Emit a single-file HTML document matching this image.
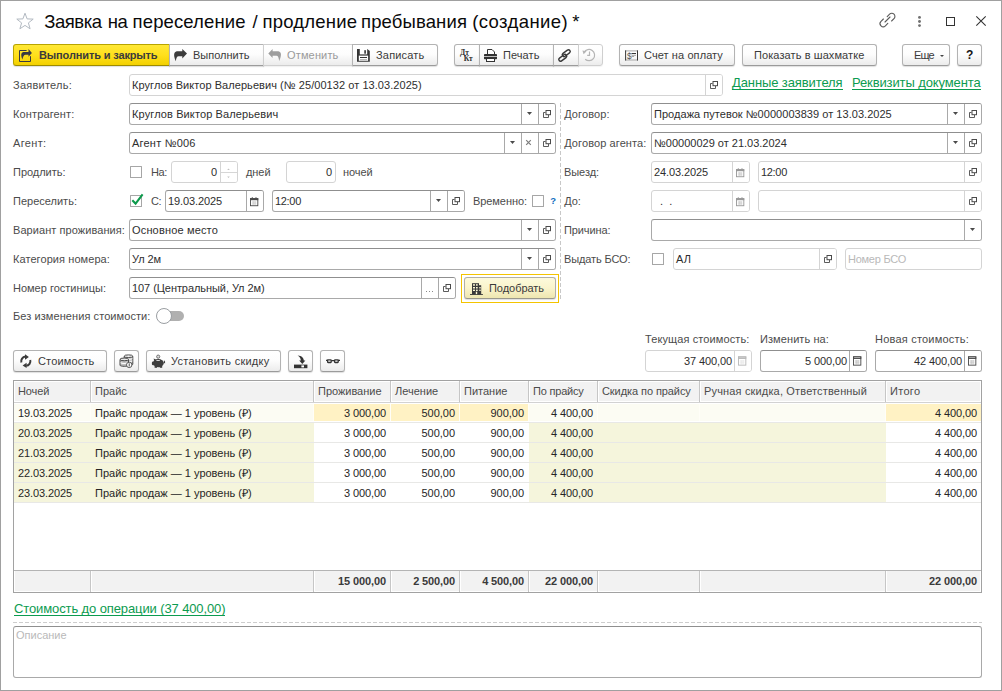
<!DOCTYPE html>
<html lang="ru">
<head>
<meta charset="utf-8">
<title>Заявка на переселение / продление пребывания (создание) *</title>
<style>
*{box-sizing:border-box;margin:0;padding:0}
html,body{width:1002px;height:691px;overflow:hidden;background:#fff}
body{font-family:"Liberation Sans",sans-serif;font-size:11px;color:#333;position:relative}
#win{position:absolute;left:0;top:0;width:1002px;height:691px;background:#fff;box-shadow:inset 0 0 0 1px #a0a0a0}
.a{position:absolute;white-space:nowrap}
svg{display:block;overflow:visible}
.l{position:absolute;white-space:nowrap;height:22px;line-height:22px;color:#4b4b4b}
.f{position:absolute;height:22px;border:1px solid #a9a9a9;border-top-color:#8f8f8f;border-radius:3px;background:#fff;line-height:20px;white-space:nowrap;overflow:hidden;color:#2e2e2e}
.f.ro{border-color:#d4d4d4}
.f .t{position:absolute;top:0;height:20px;line-height:20px}
.f .b{position:absolute;top:0;bottom:0;width:17px;border-left:1px solid #a9a9a9;background:#fff}
.f.ro .b{border-left-color:#d4d4d4}
.f .b .i{position:absolute}
.ph{color:#b9b9b9}
.btn{position:absolute;height:22px;border:1px solid #b3b3b3;border-bottom-color:#9b9b9b;border-radius:3px;background:linear-gradient(#ffffff 0%,#fdfdfd 45%,#ececec 100%);line-height:20px;white-space:nowrap;color:#3a3a3a;box-shadow:0 1px 1px rgba(0,0,0,.13)}
.btn .t{position:absolute;top:0;height:20px;line-height:20px}
.btn svg{position:absolute}
.btn.dis{color:#9a9a9a;border-color:#cfcfcf;box-shadow:0 1px 1px rgba(0,0,0,.05)}
.btn.y{background:linear-gradient(#ffe836 0%,#ffe01c 50%,#f3d100 100%);border-color:#b8a400;border-bottom-color:#9e8c00;color:#3b3b3b}
.btn.gl{border-radius:3px 0 0 3px}
.btn.gm{border-radius:0}
.btn.gr{border-radius:0 3px 3px 0}
.cb{position:absolute;width:12px;height:12px;border:1px solid #a6a6a6;border-radius:0.5px;background:#fff}
.lnk{position:absolute;white-space:nowrap;font-size:13px;color:#0c9b50;height:16px;line-height:16px}
.lnk i{position:absolute;left:0;right:0;height:1px;background:#0c9b50;top:14px}
.btn.def{background:linear-gradient(#fdfadc 0%,#faf4cc 50%,#eee6b0 100%);border-color:#b2b0a6;border-bottom-color:#9a988c}
.th{height:22px;line-height:22px;color:#4b4b4b}
.td{height:20px;line-height:20px;color:#262626}
.title{position:absolute;left:0;top:9.6px;height:24px;width:700px;font-size:18.5px;color:#0a0a0a;white-space:nowrap}
.title span{position:absolute;top:0;height:24px;line-height:24px}

</style>
</head>
<body>
<div id="win">
<svg class="a" style="left:16px;top:12px;" width="18" height="18" viewBox="0 0 18 18"><path d="M9 1.2L11.1 6.9L17.2 7.1L12.4 10.9L14.1 16.8L9 13.4L3.9 16.8L5.6 10.9L0.8 7.1L6.9 6.9Z" fill="none" stroke="#b3bac2" stroke-width="1"/></svg>
<div class="title"><span style="left:44.24px;letter-spacing:-0.45px">Заявка</span> <span style="left:107.8px;letter-spacing:-0.6px">на</span> <span style="left:132.62px;letter-spacing:0.112px">переселение</span> <span style="left:252.6px;letter-spacing:0px">/</span> <span style="left:262.5px;letter-spacing:0.2px">продление</span> <span style="left:361.06px;letter-spacing:0.124px">пребывания</span> <span style="left:472.18px;letter-spacing:0.391px">(создание)</span> <span style="left:572.36px;letter-spacing:0px">*</span></div>
<svg class="a" style="left:879px;top:12px;" width="18" height="17" viewBox="0 0 18 17"><g fill="none" stroke="#5a5a5a" stroke-width="1.1" stroke-linecap="round"><path d="M8.2 4.6L10.6 2.2a3.1 3.1 0 0 1 4.4 4.4L12.6 9"/><path d="M8.8 11.4L6.4 13.8a3.1 3.1 0 0 1 -4.4 -4.4L4.4 7"/><path d="M6 10L11 5"/></g></svg>
<svg class="a" style="left:918px;top:16px;" width="3" height="11" viewBox="0 0 3 11"><circle cx="1.5" cy="1.4" r="1.45" fill="#707070"/><circle cx="1.5" cy="5.5" r="1.45" fill="#707070"/><circle cx="1.5" cy="9.6" r="1.45" fill="#707070"/></svg>
<div class="a" style="left:946px;top:17px;width:9px;height:9px;border:1px solid #333"></div>
<svg class="a" style="left:976px;top:16px;" width="10" height="10" viewBox="0 0 10 10"><path d="M0.3 0.3L9.7 9.7M9.7 0.3L0.3 9.7" stroke="#333" stroke-width="1.1" fill="none"/></svg>
<div class="btn y gl" style="left:13px;top:44px;width:157px;height:22px"><svg style="left:4px;top:3px" width="15" height="15" viewBox="0 0 15 15"><path d="M8.6 2.5H1.5V13.5H12.5V8.2" fill="none" stroke="#3a3a42"/><path d="M10.5 1L13.9 5.1L10.5 8.7V6.7H7.5C6 6.7 5 8.5 4.4 11.6C3.4 9 2.8 6.4 3.6 5.2C4.2 4.3 5 4 6.5 4H10.5Z" fill="#3a3a42"/></svg><span class="t" style="left:25px;letter-spacing:-0.135px;font-weight:bold;">Выполнить и закрыть</span></div>
<div class="btn gm" style="left:169px;top:44px;width:95px;height:22px"><svg style="left:3px;top:3px" width="15" height="14" viewBox="0 0 15 14"><path d="M9.3 0.9L14 5.6L9.3 10.6V8.2H5.5C4 8.2 3.3 10 2.8 13.2C1.2 10 0.6 6 1.8 4.6C2.5 3.6 3.5 3.2 5 3.2H9.3Z" fill="#3c3c3c"/></svg><span class="t" style="left:23px;letter-spacing:0.0px;">Выполнить</span></div>
<div class="btn gm dis" style="left:263px;top:44px;width:90px;height:22px"><svg style="left:3px;top:3px" width="15" height="14" viewBox="0 0 15 14"><path d="M5.6 1L1.3 5.6L5.6 10.1V7.8H9.5C11 7.8 11.7 9.6 12.2 13C13.8 10 14.6 6 13.4 4.6C12.7 3.6 11.7 3.2 10.2 3.2H5.6Z" fill="#9e9e9e"/></svg><span class="t" style="left:23px;letter-spacing:0.154px;">Отменить</span></div>
<div class="btn gr" style="left:352px;top:44px;width:86px;height:22px"><svg style="left:4px;top:4px" width="13" height="13" viewBox="0 0 13 13"><path d="M0 0H10.2L12.8 2V12.8H0Z" fill="#353535"/><rect x="2.8" y="0" width="7.4" height="5.4" fill="#fff"/><rect x="7.3" y="1.2" width="1.6" height="3.5" fill="#353535"/><rect x="1.8" y="6.6" width="9.3" height="5.2" fill="#fff"/><rect x="3" y="8" width="7" height="1" fill="#353535"/><rect x="3" y="10.2" width="7" height="1" fill="#aaa"/></svg><span class="t" style="left:23px;letter-spacing:0.186px;">Записать</span></div>
<div class="btn gl" style="left:454px;top:44px;width:26px;height:22px"><svg style="left:5px;top:4px" width="14" height="13" viewBox="0 0 14 13"><g font-family="Liberation Serif,serif" font-weight="bold" fill="#2e2e2e"><text x="0" y="5.8" font-size="7.6">Д</text><text x="5.2" y="5.8" font-size="7.4">т</text><text x="3.8" y="11.8" font-size="7.6">К</text><text x="8.9" y="11.8" font-size="7.4">т</text></g></svg></div>
<div class="btn gm" style="left:479px;top:44px;width:75px;height:22px"><svg style="left:4px;top:4px" width="14" height="13" viewBox="0 0 14 13"><path d="M3.5 5V0.5H8L10.5 3V5" fill="#fff" stroke="#333"/><rect x="0" y="5" width="13" height="5.2" rx="0.8" fill="#333"/><rect x="0" y="7.1" width="13" height="0.9" fill="#cfcfcf"/><rect x="2.5" y="9.5" width="8" height="3" fill="#fff" stroke="#333"/></svg><span class="t" style="left:23px;letter-spacing:0.073px;">Печать</span></div>
<div class="btn gm" style="left:553px;top:44px;width:26px;height:22px"><svg style="left:4px;top:4px" width="14" height="14" viewBox="0 0 14 14"><g fill="none" stroke="#383838" stroke-width="1.4" transform="rotate(-37 6.5 6.5)"><rect x="4.8" y="3.95" width="9" height="3.5" rx="1.75"/><rect x="-0.8" y="5.55" width="9" height="3.5" rx="1.75"/></g></svg></div>
<div class="btn gr dis" style="left:578px;top:44px;width:25px;height:22px"><svg style="left:3.2px;top:3.4px" width="14" height="14" viewBox="0 0 14 14"><g fill="none" stroke="#b5b5b5" stroke-width="1.2"><path d="M2.2 4.2A5.6 5.6 0 1 1 3.2 11.2"/><path d="M7.5 3.6V7.3H5.2"/></g><path d="M0.4 2.6L4.6 3.2L1.6 6.2Z" fill="#b5b5b5"/></svg></div>
<div class="btn " style="left:619px;top:44px;width:116px;height:22px"><svg style="left:5px;top:5px" width="13" height="11" viewBox="0 0 13 11"><rect x="0.1" y="0.4" width="12.9" height="1" fill="#a8a8a8"/><rect x="0.1" y="9.5" width="12.9" height="1" fill="#a8a8a8"/><rect x="0.1" y="0.4" width="1" height="10.1" fill="#383838"/><rect x="12" y="0.4" width="1" height="10.1" fill="#383838"/><text x="1.9" y="8.7" font-size="8.2" font-family="Liberation Sans,sans-serif" fill="#505050">$</text><rect x="6.5" y="3" width="4.5" height="1" fill="#383838"/><rect x="6.5" y="4.8" width="4.5" height="0.9" fill="#9a9a9a"/><rect x="6.5" y="6.1" width="2.6" height="0.9" fill="#9a9a9a"/></svg><span class="t" style="left:24px;letter-spacing:0.092px;">Счет на оплату</span></div>
<div class="btn " style="left:742px;top:44px;width:135px;height:22px"><span class="t" style="left:11px;letter-spacing:0.092px;">Показать в шахматке</span></div>
<div class="btn " style="left:902px;top:44px;width:48px;height:22px"><svg style="left:37px;top:10px" width="4" height="2" viewBox="0 0 4 2"><path d="M0 0H4L2 2Z" fill="#444"/></svg><span class="t" style="left:11px;letter-spacing:-0.864px;">Еще</span></div>
<div class="btn " style="left:957px;top:44px;width:25px;height:22px"><span class="t" style="left:8px;letter-spacing:0px;font-weight:bold;font-size:12px;color:#151515;">?</span></div>
<div class="l" style="left:13px;top:74px;letter-spacing:0.241px;">Заявитель:</div>
<div class="f ro" style="left:129px;top:74px;width:594px;height:22px"><span class="t" style="left:2px;letter-spacing:0.058px">Круглов Виктор Валерьевич (№ 25/00132 от 13.03.2025)</span><span class="b" style="right:0px"><svg class="i" style="left:4px;top:6px" width="8" height="8" viewBox="0 0 8 8"><path d="M2.5 2.5H0.5V7.5H5.5V5" fill="none" stroke="#4a4a4a" stroke-width="1" opacity="0.9"/><rect x="3" y="0.5" width="4.5" height="4.2" fill="#fff" stroke="#4a4a4a" stroke-width="1"/></svg></span></div>
<div class="lnk" style="left:732px;top:75px;letter-spacing:-0.106px">Данные заявителя<i></i></div>
<div class="lnk" style="left:852px;top:75px;letter-spacing:-0.116px">Реквизиты документа<i></i></div>
<div class="l" style="left:13px;top:103px;letter-spacing:0.139px;">Контрагент:</div>
<div class="f" style="left:129px;top:103px;width:427px;height:22px"><span class="t" style="left:2px;letter-spacing:0.115px">Круглов Виктор Валерьевич</span><span class="b" style="right:17px"><svg class="i" style="left:4.6px;top:8.3px" width="5" height="3" viewBox="0 0 5 3"><path d="M0 0H5L2.5 2.9Z" fill="#4a4a4a"/></svg></span><span class="b" style="right:0px"><svg class="i" style="left:4px;top:6px" width="8" height="8" viewBox="0 0 8 8"><path d="M2.5 2.5H0.5V7.5H5.5V5" fill="none" stroke="#4a4a4a" stroke-width="1" opacity="0.9"/><rect x="3" y="0.5" width="4.5" height="4.2" fill="#fff" stroke="#4a4a4a" stroke-width="1"/></svg></span></div>
<div class="l" style="left:13px;top:132px;letter-spacing:0.346px;">Агент:</div>
<div class="f" style="left:129px;top:132px;width:427px;height:22px"><span class="t" style="left:2px;letter-spacing:0.211px">Агент №006</span><span class="b" style="right:34px"><svg class="i" style="left:4.6px;top:8.3px" width="5" height="3" viewBox="0 0 5 3"><path d="M0 0H5L2.5 2.9Z" fill="#4a4a4a"/></svg></span><span class="b" style="right:17px"><svg class="i" style="left:4.4px;top:7.4px" width="5" height="5" viewBox="0 0 5 5"><path d="M0.2 0.2L4.8 4.8M4.8 0.2L0.2 4.8" stroke="#7c7c7c" stroke-width="1.2" fill="none"/></svg></span><span class="b" style="right:0px"><svg class="i" style="left:4px;top:6px" width="8" height="8" viewBox="0 0 8 8"><path d="M2.5 2.5H0.5V7.5H5.5V5" fill="none" stroke="#4a4a4a" stroke-width="1" opacity="0.9"/><rect x="3" y="0.5" width="4.5" height="4.2" fill="#fff" stroke="#4a4a4a" stroke-width="1"/></svg></span></div>
<div class="l" style="left:13px;top:161px;letter-spacing:-0.026px;">Продлить:</div>
<div class="cb" style="left:130px;top:166px"></div>
<div class="l" style="left:151px;top:161px;letter-spacing:-0.375px;">На:</div>
<div class="f ro" style="left:171px;top:161px;width:67px;height:22px"><span class="t" style="right:20px;letter-spacing:0px;margin-right:0px">0</span><span class="b" style="right:0px"><svg class="i" style="left:0;top:0" width="16" height="20" viewBox="0 0 16 20"><rect x="0" y="10" width="16" height="1" fill="#d6d6d6"/><path d="M6.2 7.9L7.5 6.6L8.8 7.9Z M6.2 14.6L7.5 15.9L8.8 14.6Z" fill="#c0c0c0"/></svg></span></div>
<div class="l" style="left:246px;top:161px;letter-spacing:-0.066px;">дней</div>
<div class="f ro" style="left:286px;top:161px;width:50px;height:22px"><span class="t" style="right:3px;letter-spacing:0px;margin-right:0px">0</span></div>
<div class="l" style="left:343px;top:161px;letter-spacing:-0.094px;">ночей</div>
<div class="l" style="left:13px;top:190px;letter-spacing:0.006px;">Переселить:</div>
<div class="cb" style="left:130px;top:195px"></div>
<svg class="a" style="left:130px;top:192px;" width="15" height="15" viewBox="0 0 15 15"><path d="M2.3 8.2L5.6 11.6L12.6 2.4" fill="none" stroke="#0d9a4c" stroke-width="2.1" stroke-linejoin="miter"/></svg>
<div class="l" style="left:151px;top:190px;letter-spacing:-0.5px;">С:</div>
<div class="f" style="left:165px;top:190px;width:99px;height:22px"><span class="t" style="left:2px;letter-spacing:-0.113px">19.03.2025</span><span class="b" style="right:0px"><svg class="i" style="left:3px;top:5.8px" width="8.3" height="9.2" viewBox="0 0 9 10"><rect x="0.5" y="1.8" width="8" height="7.7" fill="#fff" stroke="#4a4a4a"/><rect x="0" y="1.3" width="9" height="2.2" fill="#4a4a4a"/><path d="M2.5 0V1.5M6.5 0V1.5" stroke="#4a4a4a" stroke-width="1.2" opacity="0.7"/><path d="M2 5.5H7M2 7.5H7M3.5 4.5V8.5M5.5 4.5V8.5" stroke="#bdbdbd" stroke-width="0.7"/></svg></span></div>
<div class="f" style="left:272px;top:190px;width:193px;height:22px"><span class="t" style="left:2px;letter-spacing:-0.312px">12:00</span><span class="b" style="right:17px"><svg class="i" style="left:4.6px;top:8.3px" width="5" height="3" viewBox="0 0 5 3"><path d="M0 0H5L2.5 2.9Z" fill="#4a4a4a"/></svg></span><span class="b" style="right:0px"><svg class="i" style="left:4px;top:6px" width="8" height="8" viewBox="0 0 8 8"><path d="M2.5 2.5H0.5V7.5H5.5V5" fill="none" stroke="#4a4a4a" stroke-width="1" opacity="0.9"/><rect x="3" y="0.5" width="4.5" height="4.2" fill="#fff" stroke="#4a4a4a" stroke-width="1"/></svg></span></div>
<div class="l" style="left:473px;top:190px;letter-spacing:-0.069px;">Временно:</div>
<div class="cb" style="left:532px;top:195px"></div>
<div class="l" style="left:550.2px;top:189.8px;letter-spacing:0px;font-weight:bold;color:#0f6cc0;font-size:9.5px;">?</div>
<div class="l" style="left:13px;top:219px;letter-spacing:0.069px;">Вариант проживания:</div>
<div class="f" style="left:129px;top:219px;width:427px;height:22px"><span class="t" style="left:2px;letter-spacing:0.163px">Основное место</span><span class="b" style="right:17px"><svg class="i" style="left:4.6px;top:8.3px" width="5" height="3" viewBox="0 0 5 3"><path d="M0 0H5L2.5 2.9Z" fill="#4a4a4a"/></svg></span><span class="b" style="right:0px"><svg class="i" style="left:4px;top:6px" width="8" height="8" viewBox="0 0 8 8"><path d="M2.5 2.5H0.5V7.5H5.5V5" fill="none" stroke="#4a4a4a" stroke-width="1" opacity="0.9"/><rect x="3" y="0.5" width="4.5" height="4.2" fill="#fff" stroke="#4a4a4a" stroke-width="1"/></svg></span></div>
<div class="l" style="left:13px;top:248px;letter-spacing:0.075px;">Категория номера:</div>
<div class="f" style="left:129px;top:248px;width:427px;height:22px"><span class="t" style="left:2px;letter-spacing:-0.084px">Ул 2м</span><span class="b" style="right:17px"><svg class="i" style="left:4.6px;top:8.3px" width="5" height="3" viewBox="0 0 5 3"><path d="M0 0H5L2.5 2.9Z" fill="#4a4a4a"/></svg></span><span class="b" style="right:0px"><svg class="i" style="left:4px;top:6px" width="8" height="8" viewBox="0 0 8 8"><path d="M2.5 2.5H0.5V7.5H5.5V5" fill="none" stroke="#4a4a4a" stroke-width="1" opacity="0.9"/><rect x="3" y="0.5" width="4.5" height="4.2" fill="#fff" stroke="#4a4a4a" stroke-width="1"/></svg></span></div>
<div class="l" style="left:13px;top:277px;letter-spacing:0.0px;">Номер гостиницы:</div>
<div class="f" style="left:129px;top:277px;width:327px;height:22px"><span class="t" style="left:2px;letter-spacing:-0.063px">107 (Центральный, Ул 2м)</span><span class="b" style="right:17px"><svg class="i" style="left:4px;top:13px" width="9" height="2" viewBox="0 0 9 2"><rect x="0" y="0" width="1" height="1" fill="#8a8a8a"/><rect x="3" y="0" width="1" height="1" fill="#8a8a8a"/><rect x="6" y="0" width="1" height="1" fill="#8a8a8a"/></svg></span><span class="b" style="right:0px"><svg class="i" style="left:4px;top:6px" width="8" height="8" viewBox="0 0 8 8"><path d="M2.5 2.5H0.5V7.5H5.5V5" fill="none" stroke="#4a4a4a" stroke-width="1" opacity="0.9"/><rect x="3" y="0.5" width="4.5" height="4.2" fill="#fff" stroke="#4a4a4a" stroke-width="1"/></svg></span></div>
<div class="a" style="left:461px;top:274px;width:98px;height:29px;border:1px solid #f4c400"></div>
<div class="btn def" style="left:464px;top:277px;width:92px;height:22px"><svg style="left:5px;top:5px" width="13" height="12" viewBox="0 0 13 12"><g fill="#3a3a3a"><rect x="2" y="0.2" width="7" height="11.2"/><rect x="9" y="2.2" width="2.2" height="9.2"/><rect x="0" y="11.1" width="12.9" height="0.9"/></g><g fill="#fcf7d4"><rect x="3" y="1.2" width="2" height="1.5"/><rect x="6" y="1.2" width="1.7" height="1.5"/><rect x="3" y="4" width="2" height="1.5"/><rect x="6" y="4" width="1.7" height="1.5"/><rect x="3" y="6.6" width="2" height="1.4"/><rect x="6" y="6.6" width="1.7" height="1.4"/><rect x="9.3" y="4" width="1.4" height="1.5"/><rect x="9.3" y="6.6" width="1.4" height="1.4"/><rect x="5.8" y="8.7" width="1.4" height="2.4"/></g></svg><span class="t" style="left:24px;letter-spacing:-0.047px;">Подобрать</span></div>
<div class="l" style="left:13px;top:305px;letter-spacing:0.078px;">Без изменения стоимости:</div>
<div class="a" style="left:164px;top:311px;width:20px;height:10px;border-radius:5px;background:#b0b0b0"></div>
<div class="a" style="left:155.6px;top:307.6px;width:16.6px;height:16.8px;border-radius:8.4px;background:#fff;border:1px solid #9a9ea2"></div>
<div class="a" style="left:560px;top:103px;width:1px;height:197px;background:repeating-linear-gradient(to bottom,#c8c8c8 0,#c8c8c8 3.6px,transparent 3.6px,transparent 6px)"></div>
<div class="l" style="left:564.2px;top:103px;letter-spacing:0.095px;">Договор:</div>
<div class="f" style="left:651px;top:103px;width:331px;height:22px"><span class="t" style="left:2px;letter-spacing:0.038px">Продажа путевок №0000003839 от 13.03.2025</span><span class="b" style="right:17px"><svg class="i" style="left:4.6px;top:8.3px" width="5" height="3" viewBox="0 0 5 3"><path d="M0 0H5L2.5 2.9Z" fill="#4a4a4a"/></svg></span><span class="b" style="right:0px"><svg class="i" style="left:4px;top:6px" width="8" height="8" viewBox="0 0 8 8"><path d="M2.5 2.5H0.5V7.5H5.5V5" fill="none" stroke="#4a4a4a" stroke-width="1" opacity="0.9"/><rect x="3" y="0.5" width="4.5" height="4.2" fill="#fff" stroke="#4a4a4a" stroke-width="1"/></svg></span></div>
<div class="l" style="left:564.2px;top:132px;letter-spacing:0.097px;">Договор агента:</div>
<div class="f" style="left:651px;top:132px;width:331px;height:22px"><span class="t" style="left:2px;letter-spacing:0.001px">№00000029 от 21.03.2024</span><span class="b" style="right:17px"><svg class="i" style="left:4.6px;top:8.3px" width="5" height="3" viewBox="0 0 5 3"><path d="M0 0H5L2.5 2.9Z" fill="#4a4a4a"/></svg></span><span class="b" style="right:0px"><svg class="i" style="left:4px;top:6px" width="8" height="8" viewBox="0 0 8 8"><path d="M2.5 2.5H0.5V7.5H5.5V5" fill="none" stroke="#4a4a4a" stroke-width="1" opacity="0.9"/><rect x="3" y="0.5" width="4.5" height="4.2" fill="#fff" stroke="#4a4a4a" stroke-width="1"/></svg></span></div>
<div class="l" style="left:564px;top:161px;letter-spacing:-0.073px;">Выезд:</div>
<div class="f ro" style="left:651px;top:161px;width:99px;height:22px"><span class="t" style="left:2px;letter-spacing:-0.113px">24.03.2025</span><span class="b" style="right:0px"><svg class="i" style="left:3px;top:5.8px" width="8.3" height="9.2" viewBox="0 0 9 10"><rect x="0.5" y="1.8" width="8" height="7.7" fill="#fff" stroke="#989898"/><rect x="0" y="1.3" width="9" height="2.2" fill="#989898"/><path d="M2.5 0V1.5M6.5 0V1.5" stroke="#989898" stroke-width="1.2" opacity="0.7"/><path d="M2 5.5H7M2 7.5H7M3.5 4.5V8.5M5.5 4.5V8.5" stroke="#bdbdbd" stroke-width="0.7"/></svg></span></div>
<div class="f ro" style="left:758px;top:161px;width:224px;height:22px"><span class="t" style="left:2px;letter-spacing:-0.312px">12:00</span><span class="b" style="right:0px"><svg class="i" style="left:4px;top:6px" width="8" height="8" viewBox="0 0 8 8"><path d="M2.5 2.5H0.5V7.5H5.5V5" fill="none" stroke="#4a4a4a" stroke-width="1" opacity="0.9"/><rect x="3" y="0.5" width="4.5" height="4.2" fill="#fff" stroke="#4a4a4a" stroke-width="1"/></svg></span></div>
<div class="l" style="left:564.2px;top:190px;letter-spacing:-0.089px;">До:</div>
<div class="f ro" style="left:651px;top:190px;width:99px;height:22px"><span class="t" style="left:2px;letter-spacing:0px">&nbsp; .&nbsp; .</span><span class="b" style="right:0px"><svg class="i" style="left:3px;top:5.8px" width="8.3" height="9.2" viewBox="0 0 9 10"><rect x="0.5" y="1.8" width="8" height="7.7" fill="#fff" stroke="#989898"/><rect x="0" y="1.3" width="9" height="2.2" fill="#989898"/><path d="M2.5 0V1.5M6.5 0V1.5" stroke="#989898" stroke-width="1.2" opacity="0.7"/><path d="M2 5.5H7M2 7.5H7M3.5 4.5V8.5M5.5 4.5V8.5" stroke="#bdbdbd" stroke-width="0.7"/></svg></span></div>
<div class="f ro" style="left:758px;top:190px;width:224px;height:22px"><span class="b" style="right:0px"><svg class="i" style="left:4px;top:6px" width="8" height="8" viewBox="0 0 8 8"><path d="M2.5 2.5H0.5V7.5H5.5V5" fill="none" stroke="#4a4a4a" stroke-width="1" opacity="0.9"/><rect x="3" y="0.5" width="4.5" height="4.2" fill="#fff" stroke="#4a4a4a" stroke-width="1"/></svg></span></div>
<div class="l" style="left:564px;top:219px;letter-spacing:-0.102px;">Причина:</div>
<div class="f" style="left:651px;top:219px;width:331px;height:22px"><span class="b" style="right:0px"><svg class="i" style="left:4.6px;top:8.3px" width="5" height="3" viewBox="0 0 5 3"><path d="M0 0H5L2.5 2.9Z" fill="#4a4a4a"/></svg></span></div>
<div class="l" style="left:564px;top:248px;letter-spacing:-0.119px;">Выдать БСО:</div>
<div class="cb" style="left:652px;top:253px"></div>
<div class="f ro" style="left:673px;top:248px;width:164px;height:22px"><span class="t" style="left:2px;letter-spacing:0.102px">АЛ</span><span class="b" style="right:0px"><svg class="i" style="left:4px;top:6px" width="8" height="8" viewBox="0 0 8 8"><path d="M2.5 2.5H0.5V7.5H5.5V5" fill="none" stroke="#4a4a4a" stroke-width="1" opacity="0.9"/><rect x="3" y="0.5" width="4.5" height="4.2" fill="#fff" stroke="#4a4a4a" stroke-width="1"/></svg></span></div>
<div class="f ro" style="left:845px;top:248px;width:137px;height:22px"><span class="t ph" style="left:2px;letter-spacing:-0.255px">Номер БСО</span></div>
<div class="l" style="left:645px;top:328px;letter-spacing:0.109px;">Текущая стоимость:</div>
<div class="f ro" style="left:645px;top:350px;width:107px;height:22px"><span class="t" style="right:19px;letter-spacing:-0.111px;margin-right:0.111px">37 400,00</span><span class="b" style="right:0px"><svg class="i" style="left:3px;top:5px" width="8.3" height="10" viewBox="0 0 9 10"><rect x="0.5" y="0.5" width="8" height="9" fill="#fff" stroke="#b9b9b9"/><rect x="0" y="0" width="9" height="2.8" fill="#b9b9b9"/><rect x="1.2" y="1" width="6.6" height="0.8" fill="#cfcfcf"/><path d="M2 5H7M2 7H7M3.5 4V8.6M5.5 4V8.6" stroke="#b9b9b9" stroke-width="0.7" opacity="0.4"/></svg></span></div>
<div class="l" style="left:760px;top:328px;letter-spacing:0.087px;">Изменить на:</div>
<div class="f" style="left:760px;top:350px;width:107px;height:22px"><span class="t" style="right:19px;letter-spacing:-0.109px;margin-right:0.109px">5 000,00</span><span class="b" style="right:0px"><svg class="i" style="left:3px;top:5px" width="8.3" height="10" viewBox="0 0 9 10"><rect x="0.5" y="0.5" width="8" height="9" fill="#fff" stroke="#4a4a4a"/><rect x="0" y="0" width="9" height="2.8" fill="#4a4a4a"/><rect x="1.2" y="1" width="6.6" height="0.8" fill="#cfcfcf"/><path d="M2 5H7M2 7H7M3.5 4V8.6M5.5 4V8.6" stroke="#4a4a4a" stroke-width="0.7" opacity="0.4"/></svg></span></div>
<div class="l" style="left:875px;top:328px;letter-spacing:0.212px;">Новая стоимость:</div>
<div class="f" style="left:875px;top:350px;width:107px;height:22px"><span class="t" style="right:19px;letter-spacing:-0.111px;margin-right:0.111px">42 400,00</span><span class="b" style="right:0px"><svg class="i" style="left:3px;top:5px" width="8.3" height="10" viewBox="0 0 9 10"><rect x="0.5" y="0.5" width="8" height="9" fill="#fff" stroke="#4a4a4a"/><rect x="0" y="0" width="9" height="2.8" fill="#4a4a4a"/><rect x="1.2" y="1" width="6.6" height="0.8" fill="#cfcfcf"/><path d="M2 5H7M2 7H7M3.5 4V8.6M5.5 4V8.6" stroke="#4a4a4a" stroke-width="0.7" opacity="0.4"/></svg></span></div>
<div class="btn " style="left:13px;top:350px;width:94px;height:22px"><svg style="left:6px;top:4.2px" width="12" height="13" viewBox="0 0 12 13"><g fill="none" stroke="#3c3c3c" stroke-width="2"><path d="M1.36 7.39A4.6 4.6 0 0 1 5.4 1.62"/><path d="M10.24 5.01A4.6 4.6 0 0 1 6.2 10.78"/></g><path d="M5 -0.7L8.9 2L5 4.7Z M6.6 7.7L2.6 10.4L6.6 13.1Z" fill="#3c3c3c"/></svg><span class="t" style="left:24px;letter-spacing:0.16px;">Стоимость</span></div>
<div class="btn " style="left:114px;top:350px;width:25px;height:22px"><svg style="left:4px;top:3px" width="15" height="14" viewBox="0 0 15 14"><g stroke="#4a4a4a" stroke-width="1"><path d="M5.2 2.2V10.2C5.2 11.6 13.8 11.6 13.8 10.2V2.2" fill="#c4c4c4"/><ellipse cx="9.5" cy="2.2" rx="4.3" ry="1.3" fill="#f4f4f4"/><path d="M5.6 4.6C7 5.6 12 5.6 13.4 4.6M5.6 7C7 8 12 8 13.4 7" fill="none" stroke="#fff" stroke-width="0.9"/><path d="M1 5.4V11.2C1 12.7 9.5 12.7 9.5 11.2V5.4" fill="#bdbdbd"/><ellipse cx="5.25" cy="5.4" rx="4.25" ry="1.35" fill="#e8e8e8"/><path d="M1.5 8.6C3 9.7 7.5 9.7 9 8.6" fill="none" stroke="#fff" stroke-width="1.1"/></g><circle cx="10.2" cy="10.9" r="2.7" fill="#fff" stroke="#4a4a4a" stroke-width="0.9"/><rect x="9.75" y="9.3" width="0.9" height="3.2" fill="#3c3c3c"/></svg></div>
<div class="btn " style="left:146px;top:350px;width:135px;height:22px"><svg style="left:4px;top:3px" width="15" height="14" viewBox="0 0 15 14"><circle cx="7.2" cy="2.65" r="1.6" fill="#dcdcdc" stroke="#666" stroke-width="0.9"/><g fill="#3e3e3e"><ellipse cx="7.4" cy="9.2" rx="5.3" ry="4.1"/><rect x="0.9" y="7.6" width="3" height="3.6" rx="1.2"/><path d="M2.6 4.4L6 6L3.6 8Z"/><rect x="3.6" y="11.6" width="2.4" height="2.2"/><rect x="8.8" y="11.6" width="2.4" height="2.2"/><path d="M12.2 8.4L14 6.2L14.1 9.4Z"/></g><rect x="5.4" y="6.1" width="3.4" height="0.8" fill="#fff"/></svg><span class="t" style="left:24px;letter-spacing:0.258px;">Установить скидку</span></div>
<div class="btn " style="left:288px;top:350px;width:25px;height:22px"><svg style="left:5px;top:4px" width="14" height="14" viewBox="0 0 14 14"><rect x="0" y="9.6" width="13.4" height="3.6" fill="#333"/><rect x="7.4" y="10.4" width="2.6" height="2" fill="#fff"/><path d="M3.6 0.4C8 0.6 9.8 3 9.8 5.4H11.4L8.3 8.9L5.2 5.4H6.8C6.8 3.4 5.8 1.6 3.6 0.4Z" fill="#333"/></svg></div>
<div class="btn " style="left:320px;top:350px;width:25px;height:22px"><svg style="left:5px;top:8px" width="14" height="5" viewBox="0 0 14 5"><g fill="none" stroke="#333" stroke-width="1.3"><rect x="1.6" y="0.8" width="3.6" height="2.7" rx="0.5"/><rect x="8.6" y="0.8" width="3.6" height="2.7" rx="0.5"/></g><path d="M0 1.4H2M12 1.4H14M5.4 1.6H8.6" stroke="#333" stroke-width="1.2"/></svg></div>
<div class="a" style="left:13px;top:380px;width:969px;height:213px;border:1px solid #a2a2a2;background:#fff"></div>
<div class="a" style="left:15px;top:382px;width:75px;height:19px;background:#f2f2f2"></div>
<div class="a th" style="left:18px;top:380px;letter-spacing:-0.126px">Ночей</div>
<div class="a" style="left:92px;top:382px;width:221px;height:19px;background:#f2f2f2"></div>
<div class="a" style="left:90px;top:381px;width:1px;height:22px;background:#c6c6c6"></div>
<div class="a th" style="left:95px;top:380px;letter-spacing:0px">Прайс</div>
<div class="a" style="left:315px;top:382px;width:75px;height:19px;background:#f2f2f2"></div>
<div class="a" style="left:313px;top:381px;width:1px;height:22px;background:#c6c6c6"></div>
<div class="a th" style="left:318px;top:380px;letter-spacing:-0.022px">Проживание</div>
<div class="a" style="left:392px;top:382px;width:67px;height:19px;background:#f2f2f2"></div>
<div class="a" style="left:390px;top:381px;width:1px;height:22px;background:#c6c6c6"></div>
<div class="a th" style="left:395px;top:380px;letter-spacing:0px">Лечение</div>
<div class="a" style="left:461px;top:382px;width:67px;height:19px;background:#f2f2f2"></div>
<div class="a" style="left:459px;top:381px;width:1px;height:22px;background:#c6c6c6"></div>
<div class="a th" style="left:464px;top:380px;letter-spacing:0px">Питание</div>
<div class="a" style="left:530px;top:382px;width:67px;height:19px;background:#f2f2f2"></div>
<div class="a" style="left:528px;top:381px;width:1px;height:22px;background:#c6c6c6"></div>
<div class="a th" style="left:533px;top:380px;letter-spacing:-0.204px">По прайсу</div>
<div class="a" style="left:599px;top:382px;width:100px;height:19px;background:#f2f2f2"></div>
<div class="a" style="left:597px;top:381px;width:1px;height:22px;background:#c6c6c6"></div>
<div class="a th" style="left:602px;top:380px;letter-spacing:-0.077px">Скидка по прайсу</div>
<div class="a" style="left:701px;top:382px;width:184px;height:19px;background:#f2f2f2"></div>
<div class="a" style="left:699px;top:381px;width:1px;height:22px;background:#c6c6c6"></div>
<div class="a th" style="left:704px;top:380px;letter-spacing:0.16px">Ручная скидка, Ответственный</div>
<div class="a" style="left:887px;top:382px;width:93px;height:19px;background:#f2f2f2"></div>
<div class="a" style="left:885px;top:381px;width:1px;height:22px;background:#c6c6c6"></div>
<div class="a th" style="left:890px;top:380px;letter-spacing:0.311px">Итого</div>
<div class="a" style="left:14px;top:402px;width:967px;height:1px;background:#d2d2d2"></div>
<div class="a" style="left:14px;top:404px;width:77px;height:17px;background:#fcfcf3"></div>
<div class="a td" style="left:18px;top:403px;letter-spacing:-0.113px">19.03.2025</div>
<div class="a" style="left:91px;top:404px;width:223px;height:17px;background:#fcfcf3"></div>
<div class="a td" style="left:95px;top:403px;letter-spacing:0.002px">Прайс продаж — 1 уровень (₽)</div>
<div class="a" style="left:314px;top:404px;width:77px;height:17px;background:#fff2c4"></div>
<div class="a td" style="right:616px;top:403px;letter-spacing:-0.109px;margin-right:0.109px">3 000,00</div>
<div class="a" style="left:391px;top:404px;width:69px;height:17px;background:#fff2c4"></div>
<div class="a td" style="right:547px;top:403px;letter-spacing:-0.031px;margin-right:0.031px">500,00</div>
<div class="a" style="left:460px;top:404px;width:69px;height:17px;background:#fff2c4"></div>
<div class="a td" style="right:478px;top:403px;letter-spacing:-0.031px;margin-right:0.031px">900,00</div>
<div class="a" style="left:529px;top:404px;width:69px;height:17px;background:#fcfcf3"></div>
<div class="a td" style="right:409px;top:403px;letter-spacing:-0.109px;margin-right:0.109px">4 400,00</div>
<div class="a" style="left:598px;top:404px;width:102px;height:17px;background:#fcfcf3"></div>
<div class="a" style="left:700px;top:404px;width:186px;height:17px;background:#fcfcf3"></div>
<div class="a" style="left:886px;top:404px;width:95px;height:17px;background:#fff2c4"></div>
<div class="a td" style="right:25px;top:403px;letter-spacing:-0.109px;margin-right:0.109px">4 400,00</div>
<div class="a" style="left:90px;top:404px;width:1px;height:17px;background:#fffef8"></div>
<div class="a" style="left:313px;top:404px;width:1px;height:17px;background:#fffef8"></div>
<div class="a" style="left:390px;top:404px;width:1px;height:17px;background:#fffef8"></div>
<div class="a" style="left:459px;top:404px;width:1px;height:17px;background:#fffef8"></div>
<div class="a" style="left:528px;top:404px;width:1px;height:17px;background:#fffef8"></div>
<div class="a" style="left:597px;top:404px;width:1px;height:17px;background:#fffef8"></div>
<div class="a" style="left:699px;top:404px;width:1px;height:17px;background:#fffef8"></div>
<div class="a" style="left:885px;top:404px;width:1px;height:17px;background:#fffef8"></div>
<div class="a" style="left:14px;top:422px;width:967px;height:1px;background:#e8e8e6"></div>
<div class="a" style="left:14px;top:423px;width:77px;height:19px;background:#f5f5dc"></div>
<div class="a td" style="left:18px;top:423px;letter-spacing:-0.113px">20.03.2025</div>
<div class="a" style="left:91px;top:423px;width:223px;height:19px;background:#f5f5dc"></div>
<div class="a td" style="left:95px;top:423px;letter-spacing:0.002px">Прайс продаж — 1 уровень (₽)</div>
<div class="a td" style="right:616px;top:423px;letter-spacing:-0.109px;margin-right:0.109px">3 000,00</div>
<div class="a td" style="right:547px;top:423px;letter-spacing:-0.031px;margin-right:0.031px">500,00</div>
<div class="a td" style="right:478px;top:423px;letter-spacing:-0.031px;margin-right:0.031px">900,00</div>
<div class="a" style="left:529px;top:423px;width:69px;height:19px;background:#f5f5dc"></div>
<div class="a td" style="right:409px;top:423px;letter-spacing:-0.109px;margin-right:0.109px">4 400,00</div>
<div class="a" style="left:598px;top:423px;width:102px;height:19px;background:#f5f5dc"></div>
<div class="a" style="left:700px;top:423px;width:186px;height:19px;background:#f5f5dc"></div>
<div class="a td" style="right:25px;top:423px;letter-spacing:-0.109px;margin-right:0.109px">4 400,00</div>
<div class="a" style="left:14px;top:442px;width:967px;height:1px;background:#e8e8e6"></div>
<div class="a" style="left:14px;top:443px;width:77px;height:19px;background:#f5f5dc"></div>
<div class="a td" style="left:18px;top:443px;letter-spacing:-0.113px">21.03.2025</div>
<div class="a" style="left:91px;top:443px;width:223px;height:19px;background:#f5f5dc"></div>
<div class="a td" style="left:95px;top:443px;letter-spacing:0.002px">Прайс продаж — 1 уровень (₽)</div>
<div class="a td" style="right:616px;top:443px;letter-spacing:-0.109px;margin-right:0.109px">3 000,00</div>
<div class="a td" style="right:547px;top:443px;letter-spacing:-0.031px;margin-right:0.031px">500,00</div>
<div class="a td" style="right:478px;top:443px;letter-spacing:-0.031px;margin-right:0.031px">900,00</div>
<div class="a" style="left:529px;top:443px;width:69px;height:19px;background:#f5f5dc"></div>
<div class="a td" style="right:409px;top:443px;letter-spacing:-0.109px;margin-right:0.109px">4 400,00</div>
<div class="a" style="left:598px;top:443px;width:102px;height:19px;background:#f5f5dc"></div>
<div class="a" style="left:700px;top:443px;width:186px;height:19px;background:#f5f5dc"></div>
<div class="a td" style="right:25px;top:443px;letter-spacing:-0.109px;margin-right:0.109px">4 400,00</div>
<div class="a" style="left:14px;top:462px;width:967px;height:1px;background:#e8e8e6"></div>
<div class="a" style="left:14px;top:463px;width:77px;height:19px;background:#f5f5dc"></div>
<div class="a td" style="left:18px;top:463px;letter-spacing:-0.113px">22.03.2025</div>
<div class="a" style="left:91px;top:463px;width:223px;height:19px;background:#f5f5dc"></div>
<div class="a td" style="left:95px;top:463px;letter-spacing:0.002px">Прайс продаж — 1 уровень (₽)</div>
<div class="a td" style="right:616px;top:463px;letter-spacing:-0.109px;margin-right:0.109px">3 000,00</div>
<div class="a td" style="right:547px;top:463px;letter-spacing:-0.031px;margin-right:0.031px">500,00</div>
<div class="a td" style="right:478px;top:463px;letter-spacing:-0.031px;margin-right:0.031px">900,00</div>
<div class="a" style="left:529px;top:463px;width:69px;height:19px;background:#f5f5dc"></div>
<div class="a td" style="right:409px;top:463px;letter-spacing:-0.109px;margin-right:0.109px">4 400,00</div>
<div class="a" style="left:598px;top:463px;width:102px;height:19px;background:#f5f5dc"></div>
<div class="a" style="left:700px;top:463px;width:186px;height:19px;background:#f5f5dc"></div>
<div class="a td" style="right:25px;top:463px;letter-spacing:-0.109px;margin-right:0.109px">4 400,00</div>
<div class="a" style="left:14px;top:482px;width:967px;height:1px;background:#e8e8e6"></div>
<div class="a" style="left:14px;top:483px;width:77px;height:19px;background:#f5f5dc"></div>
<div class="a td" style="left:18px;top:483px;letter-spacing:-0.113px">23.03.2025</div>
<div class="a" style="left:91px;top:483px;width:223px;height:19px;background:#f5f5dc"></div>
<div class="a td" style="left:95px;top:483px;letter-spacing:0.002px">Прайс продаж — 1 уровень (₽)</div>
<div class="a td" style="right:616px;top:483px;letter-spacing:-0.109px;margin-right:0.109px">3 000,00</div>
<div class="a td" style="right:547px;top:483px;letter-spacing:-0.031px;margin-right:0.031px">500,00</div>
<div class="a td" style="right:478px;top:483px;letter-spacing:-0.031px;margin-right:0.031px">900,00</div>
<div class="a" style="left:529px;top:483px;width:69px;height:19px;background:#f5f5dc"></div>
<div class="a td" style="right:409px;top:483px;letter-spacing:-0.109px;margin-right:0.109px">4 400,00</div>
<div class="a" style="left:598px;top:483px;width:102px;height:19px;background:#f5f5dc"></div>
<div class="a" style="left:700px;top:483px;width:186px;height:19px;background:#f5f5dc"></div>
<div class="a td" style="right:25px;top:483px;letter-spacing:-0.109px;margin-right:0.109px">4 400,00</div>
<div class="a" style="left:14px;top:502px;width:967px;height:1px;background:#e8e8e6"></div>
<div class="a" style="left:14px;top:570px;width:967px;height:1px;background:#b4b4b4"></div>
<div class="a" style="left:15px;top:571px;width:75px;height:20px;background:#f2f2f2"></div>
<div class="a" style="left:92px;top:571px;width:221px;height:20px;background:#f2f2f2"></div>
<div class="a" style="left:90px;top:571px;width:1px;height:21px;background:#c6c6c6"></div>
<div class="a" style="left:315px;top:571px;width:75px;height:20px;background:#f2f2f2"></div>
<div class="a" style="left:313px;top:571px;width:1px;height:21px;background:#c6c6c6"></div>
<div class="a td" style="right:616px;top:571px;font-weight:bold;color:#3a3a3a;letter-spacing:-0.111px;margin-right:0.111px">15 000,00</div>
<div class="a" style="left:392px;top:571px;width:67px;height:20px;background:#f2f2f2"></div>
<div class="a" style="left:390px;top:571px;width:1px;height:21px;background:#c6c6c6"></div>
<div class="a td" style="right:547px;top:571px;font-weight:bold;color:#3a3a3a;letter-spacing:-0.134px;margin-right:0.134px">2 500,00</div>
<div class="a" style="left:461px;top:571px;width:67px;height:20px;background:#f2f2f2"></div>
<div class="a" style="left:459px;top:571px;width:1px;height:21px;background:#c6c6c6"></div>
<div class="a td" style="right:478px;top:571px;font-weight:bold;color:#3a3a3a;letter-spacing:-0.134px;margin-right:0.134px">4 500,00</div>
<div class="a" style="left:530px;top:571px;width:67px;height:20px;background:#f2f2f2"></div>
<div class="a" style="left:528px;top:571px;width:1px;height:21px;background:#c6c6c6"></div>
<div class="a td" style="right:409px;top:571px;font-weight:bold;color:#3a3a3a;letter-spacing:-0.111px;margin-right:0.111px">22 000,00</div>
<div class="a" style="left:599px;top:571px;width:100px;height:20px;background:#f2f2f2"></div>
<div class="a" style="left:597px;top:571px;width:1px;height:21px;background:#c6c6c6"></div>
<div class="a" style="left:701px;top:571px;width:184px;height:20px;background:#f2f2f2"></div>
<div class="a" style="left:699px;top:571px;width:1px;height:21px;background:#c6c6c6"></div>
<div class="a" style="left:887px;top:571px;width:93px;height:20px;background:#f2f2f2"></div>
<div class="a" style="left:885px;top:571px;width:1px;height:21px;background:#c6c6c6"></div>
<div class="a td" style="right:25px;top:571px;font-weight:bold;color:#3a3a3a;letter-spacing:-0.111px;margin-right:0.111px">22 000,00</div>
<div class="lnk" style="left:14px;top:601px;letter-spacing:-0.113px">Стоимость до операции (37 400,00)<i></i></div>
<div class="a" style="left:13px;top:622px;width:969px;height:1px;background:repeating-linear-gradient(to right,#cdcdcd 0,#cdcdcd 4px,transparent 4px,transparent 6px)"></div>
<div class="f" style="left:13px;top:626px;width:969px;height:52px"><span class="t ph" style="left:2px;top:-2px">Описание</span></div>
</div>
</body>
</html>
